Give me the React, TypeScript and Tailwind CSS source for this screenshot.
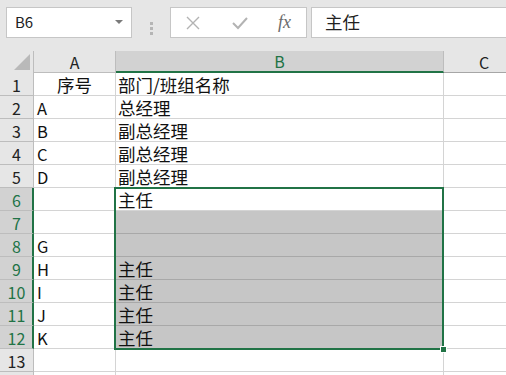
import React from "react";

// Excel-like sheet: name box + formula bar, then a small grid with B6:B12 selected.

const rows: { n: number; a: string; b: string; center?: boolean }[] = [
  { n: 1, a: "序号", b: "部门/班组名称", center: true },
  { n: 2, a: "A", b: "总经理" },
  { n: 3, a: "B", b: "副总经理" },
  { n: 4, a: "C", b: "副总经理" },
  { n: 5, a: "D", b: "副总经理" },
  { n: 6, a: "", b: "主任" },
  { n: 7, a: "", b: "" },
  { n: 8, a: "G", b: "" },
  { n: 9, a: "H", b: "主任" },
  { n: 10, a: "I", b: "主任" },
  { n: 11, a: "J", b: "主任" },
  { n: 12, a: "K", b: "主任" },
  { n: 13, a: "", b: "" },
];

const font = "font-['Noto_Sans_CJK_SC','Noto_Sans',sans-serif]";

function FormulaBar() {
  return (
    <div className="flex h-[51px] bg-[#e6e6e6] pt-[7px]">
      <div className="ml-[6px] flex h-[31px] w-[126px] items-center justify-between border border-[#c6c6c6] bg-white pl-[8px] pr-[8px]">
        <span className="text-[15px] text-[#222]">B6</span>
        <svg width="8" height="5" viewBox="0 0 8 5">
          <path d="M0 0 L8 0 L4 4 Z" fill="#7a7a7a" />
        </svg>
      </div>
      <div className="flex w-[38px] flex-col items-center justify-center gap-[2px] pb-[1px]">
        <span className="h-[3px] w-[3px] bg-[#b5b5b5]" />
        <span className="h-[3px] w-[3px] bg-[#b5b5b5]" />
        <span className="h-[3px] w-[3px] bg-[#b5b5b5]" />
      </div>
      <div className="flex h-[31px] w-[137px] items-center border border-[#c6c6c6] bg-white">
        <svg className="ml-[15px]" width="14" height="14" viewBox="0 0 14 14">
          <path d="M1 1 L13 13 M13 1 L1 13" stroke="#b3b3b3" strokeWidth="1.4" />
        </svg>
        <svg className="ml-[32px]" width="16" height="14" viewBox="0 0 16 14">
          <path d="M1 7 L6 12 L15 2" stroke="#b3b3b3" strokeWidth="2" fill="none" />
        </svg>
        <span className="ml-[30px] font-['Liberation_Serif',serif] text-[18px] italic text-[#6b6b6b]">fx</span>
      </div>
      <div className="ml-[4px] flex h-[31px] flex-1 items-center border border-r-0 border-[#c6c6c6] bg-white pl-[13px]">
        <span className="text-[17.5px] text-[#222]">主任</span>
      </div>
    </div>
  );
}

function HeaderRow() {
  return (
    <div className="grid h-[22px] grid-cols-[34px_82px_328px_80px] bg-[#e6e6e6] text-[16px]">
      <div className="relative border-r border-[#bdbdbd]">
        <svg className="absolute bottom-[3px] right-[3px]" width="16" height="16" viewBox="0 0 16 16">
          <path d="M16 0 L16 16 L0 16 Z" fill="#b9b9b9" />
        </svg>
      </div>
      <div className="flex items-center justify-center border-r border-b border-[#bdbdbd] leading-none text-[#222]">A</div>
      <div className="flex items-center justify-center border-b-2 border-r border-b-[#217346] border-r-[#bdbdbd] bg-[#d2d2d2] leading-none text-[#217346]">B</div>
      <div className="flex items-center justify-center border-b border-[#a6a6a6] leading-none text-[#222]">C</div>
    </div>
  );
}

function Row({ r }: { r: (typeof rows)[number] }) {
  const sel = r.n >= 6 && r.n <= 12;
  const gray = r.n >= 7 && r.n <= 12;
  return (
    <div className="grid h-[23px] grid-cols-[34px_82px_328px_80px] text-[17.5px] leading-none">
      <div
        className={
          sel
            ? "flex items-center justify-center border-b border-r-2 border-b-[#bdbdbd] border-r-[#217346] bg-[#d2d2d2] pl-[1px] pt-[2px] text-[16px] text-[#217346]"
            : "flex items-center justify-center border-b border-r border-[#bdbdbd] bg-[#e6e6e6] pt-[2px] text-[16px] text-[#222]"
        }
      >
        {r.n}
      </div>
      <div
        className={
          r.center
            ? "flex items-center justify-center border-b border-r border-[#d4d4d4] pt-[2px] text-[#111]"
            : "flex items-center border-b border-r border-[#d4d4d4] pl-[3px] pt-[2px] text-[16.5px] text-[#111]"
        }
      >
        {r.a}
      </div>
      <div
        className={
          gray
            ? "flex items-center border-b border-r border-b-[#a8a8a8] border-r-[#d4d4d4] bg-[#c6c6c6] pl-[2px] pt-[2px] text-[#111]"
            : "flex items-center border-b border-r border-[#d4d4d4] pl-[2px] pt-[2px] text-[#111]"
        }
      >
        {r.b}
      </div>
      <div className="border-b border-[#d4d4d4]" />
    </div>
  );
}

export default function App() {
  return (
    <div className={`relative h-[375px] w-[506px] overflow-hidden bg-white ${font}`}>
      <FormulaBar />
      <HeaderRow />
      {rows.map((r) => (
        <Row key={r.n} r={r} />
      ))}
      <div className="grid h-[3px] grid-cols-[34px_82px_328px_80px]">
        <div className="border-r border-[#bdbdbd] bg-[#e6e6e6]" />
        <div className="border-r border-[#d4d4d4]" />
        <div className="border-r border-[#d4d4d4]" />
        <div />
      </div>
      {/* selection border and fill handle over the grid */}
      <div className="pointer-events-none absolute left-[114px] top-[187px] h-[163px] w-[330px] border-2 border-[#217346]" />
      <div className="absolute left-[440px] top-[346px] h-[7px] w-[7px] border border-white bg-[#217346]" />
    </div>
  );
}
